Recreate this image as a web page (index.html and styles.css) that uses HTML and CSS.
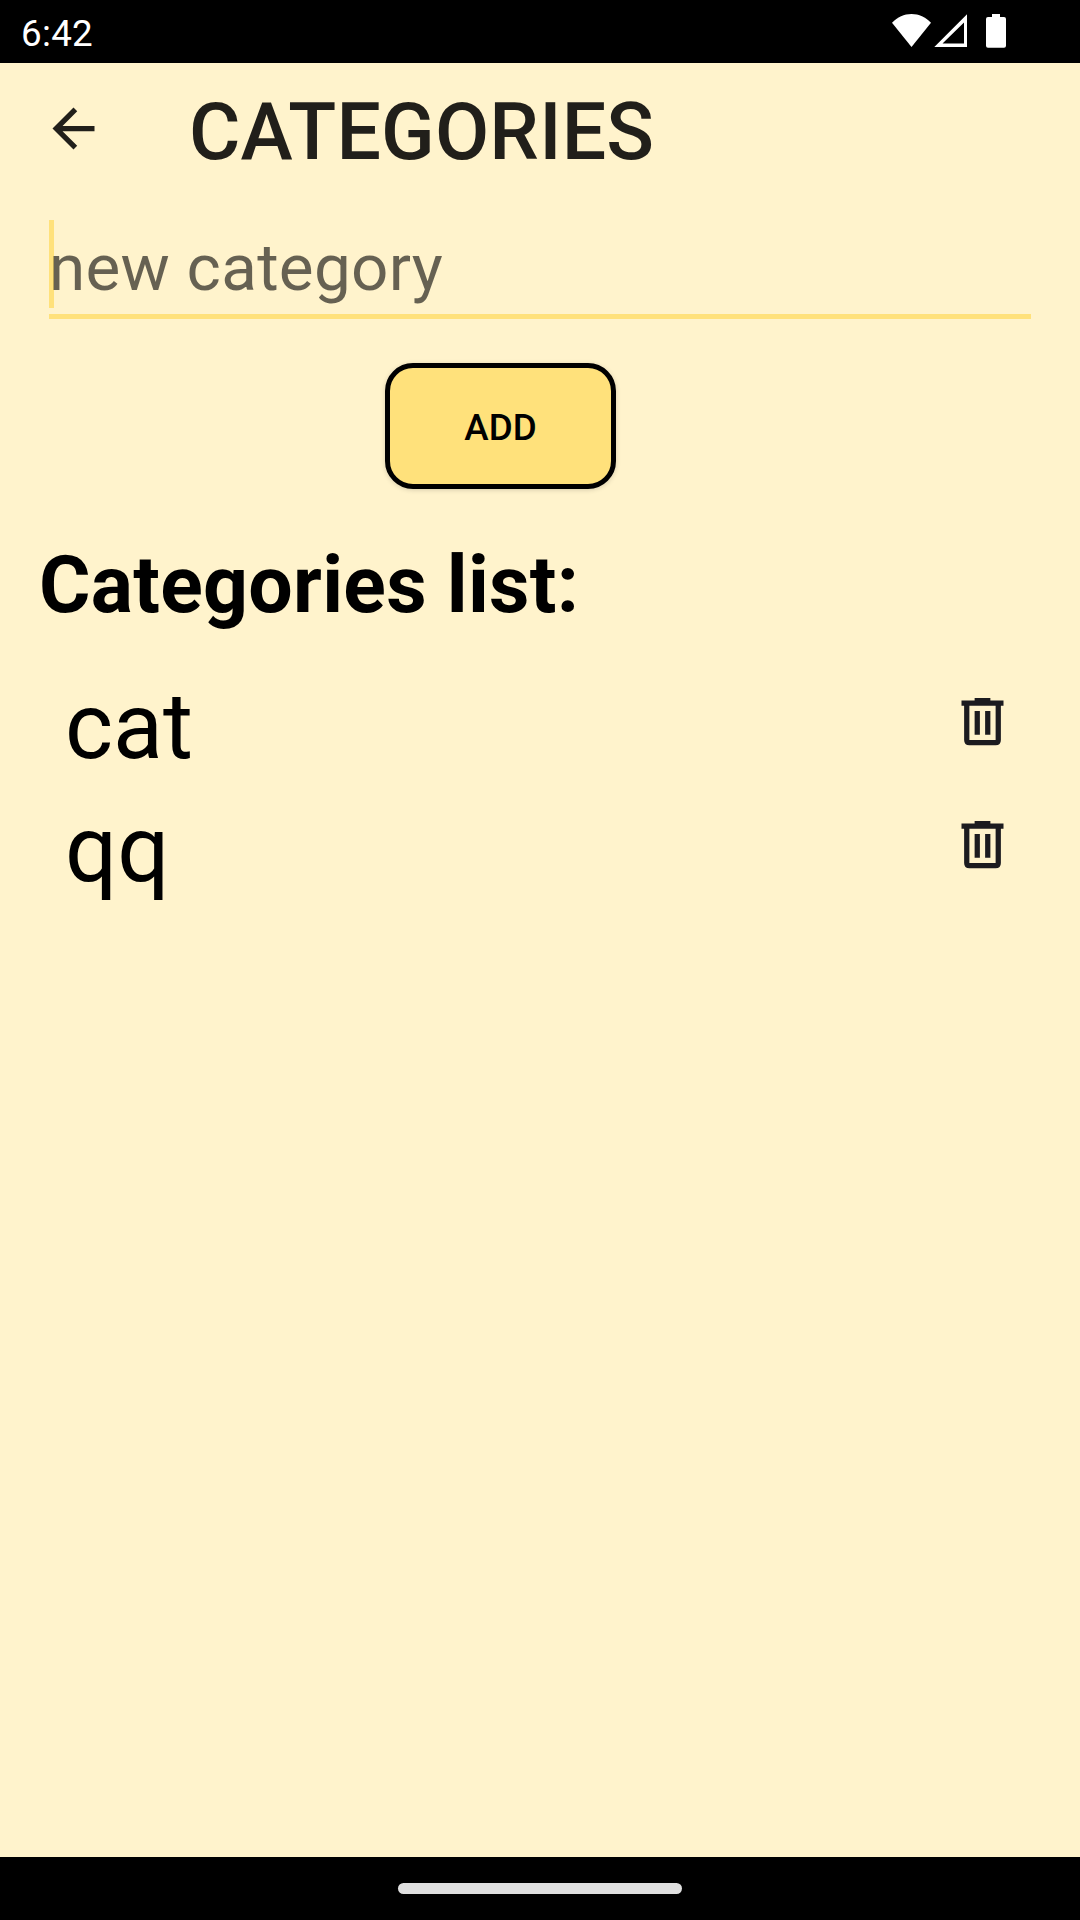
FILE: index.html
```html
<!DOCTYPE html>
<html lang="en">
<head>
<meta charset="utf-8">
<title>Categories</title>
<link rel="stylesheet" href="styles.css">
</head>
<body>
<div class="screen">
  <div class="status-bar">
    <span class="clock">6:42</span>
    <svg class="status-icons" width="116" height="36" viewBox="0 0 116 36" fill="#fff" aria-hidden="true">
      <path d="M0 10.800C5.500 4.800 12 2 19.500 2S33.500 4.800 39 10.800L19.500 35Z"/>
      <path fill-rule="evenodd" d="M75 2.200V35H42.300ZM72 10.500 50.500 31.600H72Z"/>
      <path d="M100 2h8v3h4q2 0 2 2v26.800q0 2-2 2h-16q-2 0-2-2V7q0-2 2-2h4z"/>
    </svg>
  </div>

  <header class="toolbar">
    <svg class="icon back" viewBox="0 0 24 24" aria-label="Back"><path d="M20 11H7.830l5.590-5.590L12 4l-8 8 8 8 1.410-1.410L7.830 13H20z"/></svg>
    <h1 class="title">CATEGORIES</h1>
  </header>

  <main class="content">
    <div class="field">
      <span class="caret"></span>
      <span class="hint">new category</span>
    </div>
    <button class="add" type="button">ADD</button>
    <h2 class="list-title">Categories list:</h2>
    <ul class="list">
      <li class="row">
        <span class="name">cat</span>
        <svg class="icon trash" viewBox="0 0 24 24" aria-label="Delete"><path fill-rule="evenodd" d="M9 3h6v1h5v2h-1v13q0 2-2 2H7q-2 0-2-2V6H4V4h5zM7 6v13h10V6zM9 8h2v9H9zM13 8h2v9h-2z"/></svg>
      </li>
      <li class="row">
        <span class="name">qq</span>
        <svg class="icon trash" viewBox="0 0 24 24" aria-label="Delete"><path fill-rule="evenodd" d="M9 3h6v1h5v2h-1v13q0 2-2 2H7q-2 0-2-2V6H4V4h5zM7 6v13h10V6zM9 8h2v9H9zM13 8h2v9h-2z"/></svg>
      </li>
    </ul>
  </main>

  <footer class="nav-bar"><span class="handle"></span></footer>
</div>
</body>
</html>
```
FILE: styles.css
```css
* {
  box-sizing: border-box;
}

body,
h1,
h2,
ul {
  margin: 0;
  padding: 0;
}

body {
  font-family: Roboto, "Liberation Sans", sans-serif;
  color: #000;
}

.screen {
  display: flex;
  flex-direction: column;
  width: 1080px;
  height: 1920px;
  background: #fff3cc;
}

.status-bar {
  display: flex;
  flex: none;
  justify-content: space-between;
  align-items: flex-start;
  height: 63px;
  padding: 12px 72px 0 21px;
  background: #000;
  color: #fff;
}

.clock {
  font-size: 36.75px;
  line-height: 43px;
  letter-spacing: 0.3px;
}

.toolbar {
  display: flex;
  flex: none;
  align-items: center;
  height: 131px;
  padding-left: 42px;
}

.icon {
  flex: none;
  width: 63px;
  height: 63px;
}

.back {
  fill: #211f1a;
}

.title {
  margin: 7px 0 0 84px;
  font-size: 78.75px;
  font-weight: 500;
  line-height: 92px;
  letter-spacing: 0.2px;
  color: #211f1a;
}

.content {
  display: flex;
  flex: 1;
  flex-direction: column;
  padding: 26px 49px 0;
}

.field {
  display: flex;
  height: 99px;
  border-bottom: 5px solid #ffe17b;
}

.caret {
  width: 5px;
  height: 88px;
  margin-right: -5px;
  background: #ffe17b;
}

.hint {
  z-index: 1;
  margin-top: 9px;
  font-size: 65.625px;
  line-height: 77px;
  letter-spacing: 0.25px;
  color: rgba(0, 0, 0, 0.6);
}

.add {
  width: 231px;
  height: 126px;
  margin: 44px 0 0 336px;
  padding: 3px 0 0;
  border: 5px solid #000;
  border-radius: 28px;
  background: #ffe17b;
  box-shadow: 0 1px 5px rgba(0, 0, 0, 0.16);
  font: 500 36.75px/43px Roboto, "Liberation Sans", sans-serif;
  color: #000;
}

.list-title {
  margin: 50px 0 0 -10px;
  font-size: 78.75px;
  font-weight: 700;
  line-height: 92px;
  letter-spacing: 0.3px;
}

.list {
  margin-top: 34px;
  list-style: none;
}

.row {
  display: flex;
  justify-content: space-between;
  height: 123px;
  padding: 8px 17px 7px 16px;
}

.name {
  font-size: 91.875px;
  line-height: 108px;
}

.trash {
  margin-top: 17px;
  fill: #1c1b1f;
}

.nav-bar {
  display: flex;
  flex: none;
  justify-content: center;
  height: 63px;
  padding-top: 26px;
  background: #000;
}

.handle {
  width: 284px;
  height: 11px;
  border-radius: 6px;
  background: #e0e0e0;
}
```
